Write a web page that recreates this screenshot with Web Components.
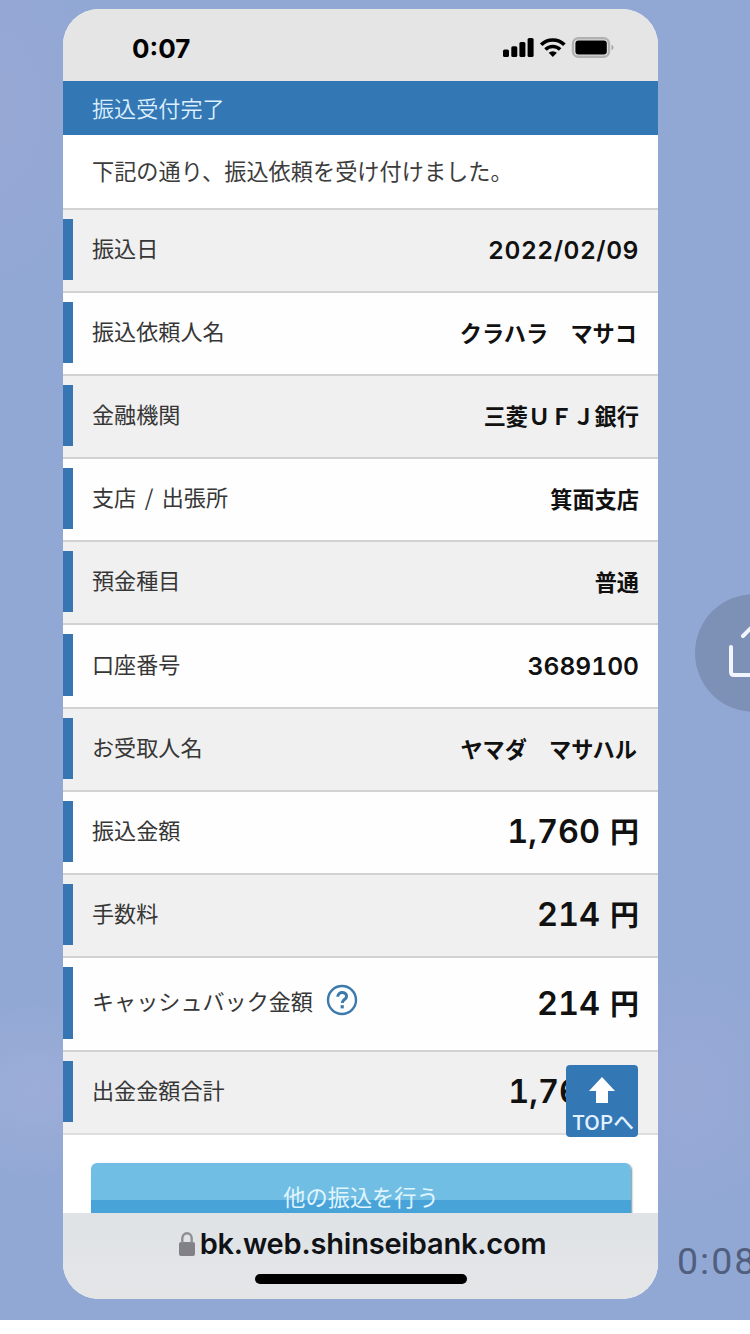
<!DOCTYPE html>
<html lang="ja">
<head>
<meta charset="UTF-8">
<title>振込受付完了</title>
<style>
    html, body { margin: 0; padding: 0; }
    body {
        width: 750px;
        height: 1334px;
        overflow: hidden;
        background: #fff;
        font-family: 'Noto Sans CJK JP', sans-serif;
    }
</style>
</head>
<body>
<chat-stage>
    <phone-screen>
        <status-bar slot="status" time="0:07"></status-bar>
        <page-title>振込受付完了</page-title>
        <page-message>下記の通り、振込依頼を受け付けました。</page-message>
        <detail-row label="振込日" shade numeric>2022/02/09</detail-row>
        <detail-row label="振込依頼人名" style="--nudge: -2px">クラハラ　マサコ</detail-row>
        <detail-row label="金融機関" shade>三菱ＵＦＪ銀行</detail-row>
        <detail-row label="支店 / 出張所">箕面支店</detail-row>
        <detail-row label="預金種目" shade>普通</detail-row>
        <detail-row label="口座番号" numeric style="--track: 0px">3689100</detail-row>
        <detail-row label="お受取人名" shade style="--nudge: -2px">ヤマダ　マサハル</detail-row>
        <detail-row label="振込金額" unit="円">1,760</detail-row>
        <detail-row label="手数料" shade unit="円">214</detail-row>
        <detail-row label="キャッシュバック金額" unit="円" help>214</detail-row>
        <detail-row label="出金金額合計" shade unit="" style="--nudge: -59px">1,76</detail-row>
        <action-button>他の振込を行う</action-button>
        <top-button slot="overlay">TOPへ</top-button>
        <address-bar slot="address">bk.web.shinseibank.com</address-bar>
    </phone-screen>
    <share-button slot="side"></share-button>
    <time-stamp slot="side">0:08</time-stamp>
</chat-stage>

<script>
/** シャドウルートを作る共通ベース */
class BaseElement extends HTMLElement {
    constructor() {
        super();
        this.attachShadow({ mode: 'open' });
    }

    connectedCallback() {
        this.shadowRoot.innerHTML = this.template();
    }
}

/** 背景と左右の配置 */
class ChatStage extends BaseElement {
    template() {
        return `
            <style>
                :host {
                    display: flex;
                    box-sizing: border-box;
                    width: 750px;
                    height: 1320px;
                    padding: 9px 0 21px 63px;
                    overflow: hidden;
                    background:
                        radial-gradient(ellipse 110px 90px at 35px 1090px, #9dadd9 0%, #9dadd900 100%),
                        radial-gradient(ellipse 100px 120px at 690px 1090px, #99a9d6 0%, #99a9d600 100%),
                        radial-gradient(ellipse 90px 180px at 0 110px, #98a8d5 0%, #98a8d500 100%),
                        #92a8d4;
                }
                .side {
                    display: flex;
                    flex-direction: column;
                    justify-content: space-between;
                    width: 92px;
                    flex-shrink: 0;
                    box-sizing: border-box;
                    padding: 585px 0 15px;
                }
            </style>
            <slot></slot>
            <div class="side"><slot name="side"></slot></div>
        `;
    }
}

/** 角丸の端末画面 */
class PhoneScreen extends BaseElement {
    template() {
        return `
            <style>
                :host {
                    display: flex;
                    flex-direction: column;
                    position: relative;
                    width: 595px;
                    height: 1290px;
                    flex-shrink: 0;
                    overflow: hidden;
                    border-radius: 36px;
                    background: #fff;
                }
                .page {
                    flex: 1;
                    min-height: 0;
                    overflow: hidden;
                }
            </style>
            <slot name="status"></slot>
            <div class="page"><slot></slot></div>
            <slot name="address"></slot>
            <slot name="overlay"></slot>
        `;
    }
}

class StatusBar extends BaseElement {
    template() {
        return `
            <style>
                :host {
                    display: flex;
                    align-items: center;
                    justify-content: space-between;
                    box-sizing: border-box;
                    height: 72px;
                    flex-shrink: 0;
                    padding: 6px 44px 0 69px;
                    background: #e5e5e6;
                    color: #000;
                }
                .time {
                    padding-top: 2px;
                    font: 700 26px/28px Inter, sans-serif;
                }
                svg { display: block; }
            </style>
            <span class="time">${this.getAttribute('time')}</span>
            <svg width="112" height="22" viewBox="0 0 112 22">
                <!-- 電波 -->
                <rect x="1" y="12.6" width="6" height="7.4" rx="1.6"/>
                <rect x="9.3" y="9.2" width="6" height="10.8" rx="1.6"/>
                <rect x="17.4" y="5" width="6" height="15" rx="1.6"/>
                <rect x="25.6" y="1" width="6" height="19" rx="1.6"/>
                <!-- Wi-Fi -->
                <g fill="none" stroke="#000" stroke-width="3.6">
                    <path d="M39.2 7.8a16.3 16.3 0 0 1 23.2 0"/>
                    <path d="M43.5 12.5a10.4 10.4 0 0 1 14.6 0"/>
                </g>
                <path d="M50.8 20l-4.1-4.2a6 6 0 0 1 8.2 0z"/>
                <!-- 電池 -->
                <rect x="71" y="1.3" width="36" height="18.4" rx="5.2" fill="none" stroke="#b1b1b2" stroke-width="2.4"/>
                <rect x="73.4" y="3.6" width="31.4" height="13.8" rx="3"/>
                <path d="M109.5 7.8q2 .8 2 2.7t-2 2.7z" fill="#a5a5a6"/>
            </svg>
        `;
    }
}

class PageTitle extends BaseElement {
    template() {
        return `
            <style>
                :host {
                    display: flex;
                    align-items: center;
                    box-sizing: border-box;
                    height: 54px;
                    padding: 0 28px 2px 29px;
                    background: #3377b4;
                    color: #dcefff;
                    font-size: 22.1px;
                    line-height: 30px;
                    font-weight: 350;
                }
            </style>
            <slot></slot>
        `;
    }
}

class PageMessage extends BaseElement {
    template() {
        return `
            <style>
                :host {
                    display: flex;
                    align-items: center;
                    box-sizing: border-box;
                    height: 73px;
                    padding: 0 29px 3px;
                    color: #3c3c3c;
                    font-size: 22.2px;
                    line-height: 30px;
                }
            </style>
            <slot></slot>
        `;
    }
}

/** 明細の1行。unit があれば金額表示、help があれば「?」を付ける */
class DetailRow extends BaseElement {
    template() {
        const unit = this.getAttribute('unit');
        const help = this.hasAttribute('help') ? `
            <svg class="help" width="32" height="32" viewBox="0 0 32 32" fill="none" stroke="#3c79ad">
                <circle cx="16" cy="16" r="14" stroke-width="2.4"/>
                <path d="M11.8 12.8c0-5.8 8.8-5.4 8.8 -.6c0 3.4-4.4 3.3-4.4 6.8" stroke-width="3"/>
                <path d="M16.2 21.2v3.2" stroke-width="3.2"/>
            </svg>` : '';

        return `
            <style>
                :host {
                    display: flex;
                    align-items: center;
                    box-sizing: border-box;
                    height: 83.1px;
                    padding-right: 19px;
                    border-top: 2px solid #d2d2d2;
                    background: #fefefe;
                    color: #111;
                }
                :host([shade]) { background: #f0f0f0; }
                :host([help]) { height: 94px; }
                .mark {
                    align-self: stretch;
                    width: 10px;
                    margin: 9px 0 11px;
                    background: #3876b3;
                }
                .label {
                    margin-left: 19px;
                    padding-bottom: 7px;
                    color: #363636;
                    font-size: 22.1px;
                    line-height: 30px;
                    word-spacing: 3.5px;
                    white-space: nowrap;
                }
                .help { margin: -7px 0 0 13px; }
                .value {
                    margin-left: auto;
                    margin-right: calc(0px - var(--nudge, 0px));
                    padding-bottom: 3px;
                    font-weight: 700;
                    font-size: 22.2px;
                    line-height: 30px;
                    white-space: pre;
                }
                :host([numeric]) .value {
                    padding-bottom: 1px;
                    font-family: Inter, sans-serif;
                    font-weight: 600;
                    font-size: 24.6px;
                    letter-spacing: var(--track, 0.5px);
                    font-variant-numeric: tabular-nums;
                }
                :host([unit]) .value {
                    display: flex;
                    align-items: center;
                    gap: 10px;
                    padding-bottom: 0;
                    font-family: Inter, sans-serif;
                    font-weight: 600;
                    font-size: 32.5px;
                    font-variant-numeric: tabular-nums;
                }
                .unit {
                    padding-bottom: 4px;
                    font-family: 'Noto Sans CJK JP', sans-serif;
                    font-weight: 700;
                    font-size: 29px;
                }
            </style>
            <span class="mark"></span>
            <span class="label">${this.getAttribute('label')}</span>
            ${help}
            <span class="value"><slot></slot>${unit ? `<span class="unit">${unit}</span>` : ''}</span>
        `;
    }
}

class ActionButton extends BaseElement {
    template() {
        return `
            <style>
                :host {
                    display: block;
                    padding: 28px 27px 0 28px;
                    border-top: 2px solid #dedede;
                }
                .button {
                    display: flex;
                    align-items: center;
                    justify-content: center;
                    box-sizing: border-box;
                    height: 72px;
                    padding-bottom: 5px;
                    border-radius: 6px;
                    background: linear-gradient(#70bee3 0 37px, #48a3d9 37px);
                    box-shadow: 1px 1px 2px #7b8d98;
                    color: #e1f5ff;
                    font-size: 22.2px;
                    line-height: 30px;
                }
            </style>
            <div class="button"><slot></slot></div>
        `;
    }
}

/** ページ先頭へ戻る浮きボタン */
class TopButton extends BaseElement {
    template() {
        return `
            <style>
                :host {
                    position: absolute;
                    right: 20px;
                    top: 1056px;
                    display: flex;
                    flex-direction: column;
                    align-items: center;
                    box-sizing: border-box;
                    width: 72px;
                    height: 72px;
                    padding: 11px 0 0 2px;
                    border-radius: 4px;
                    background: #3377b5;
                    color: #e2f1ff;
                    font-size: 20.6px;
                    line-height: 24px;
                    font-weight: 500;
                    white-space: nowrap;
                }
                svg { display: block; margin: 0 2px 5px 0; }
            </style>
            <svg width="28" height="28" viewBox="0 0 28 28"><path d="M14 1L27 15H20V27H8V15H1Z" fill="#fff"/></svg>
            <span><slot></slot></span>
        `;
    }
}

class AddressBar extends BaseElement {
    template() {
        return `
            <style>
                :host {
                    display: flex;
                    flex-direction: column;
                    align-items: center;
                    box-sizing: border-box;
                    height: 86px;
                    flex-shrink: 0;
                    padding-top: 14px;
                    background: linear-gradient(#dfe3e6, #e4e5e7);
                }
                .url {
                    display: flex;
                    align-items: center;
                    gap: 4px;
                    padding-left: 3px;
                    color: #101216;
                    font: 600 29px/34px Inter, sans-serif;
                    letter-spacing: -0.2px;
                }
                svg { display: block; }
                .home {
                    width: 212px;
                    height: 10px;
                    margin-top: 13px;
                    border-radius: 5px;
                    background: #000;
                }
            </style>
            <div class="url">
                <svg width="18" height="26" viewBox="0 0 18 26">
                    <rect x="1" y="11" width="16" height="14" rx="2" fill="#818187"/>
                    <path d="M4.3 12V7.5a4.7 5.3 0 0 1 9.4 0V12" fill="none" stroke="#8e8e94" stroke-width="2.4"/>
                </svg>
                <span><slot></slot></span>
            </div>
            <div class="home"></div>
        `;
    }
}

class ShareButton extends BaseElement {
    template() {
        return `
            <style>
                :host {
                    display: flex;
                    align-items: center;
                    justify-content: center;
                    width: 118px;
                    height: 118px;
                    margin-left: 37px;
                    border-radius: 50%;
                    background: #7d90b5;
                }
            </style>
            <svg width="54" height="60" viewBox="0 -1 54 60" fill="none" stroke="#f1f5ff" stroke-width="4" stroke-linecap="round" stroke-linejoin="round" overflow="visible">
                <path d="M4 23V48q0 3 3 3H47q3 0 3-3V23M16 12L28 0L40 12M28 0V34"/>
            </svg>
        `;
    }
}

class TimeStamp extends BaseElement {
    template() {
        return `
            <style>
                :host {
                    display: block;
                    margin-left: 19px;
                    color: #505f80;
                    font: 400 37.5px/46px Roboto, sans-serif;
                    letter-spacing: 2px;
                    white-space: nowrap;
                }
            </style>
            <slot></slot>
        `;
    }
}

customElements.define('chat-stage', ChatStage);
customElements.define('phone-screen', PhoneScreen);
customElements.define('status-bar', StatusBar);
customElements.define('page-title', PageTitle);
customElements.define('page-message', PageMessage);
customElements.define('detail-row', DetailRow);
customElements.define('action-button', ActionButton);
customElements.define('top-button', TopButton);
customElements.define('address-bar', AddressBar);
customElements.define('share-button', ShareButton);
customElements.define('time-stamp', TimeStamp);
</script>
</body>
</html>
